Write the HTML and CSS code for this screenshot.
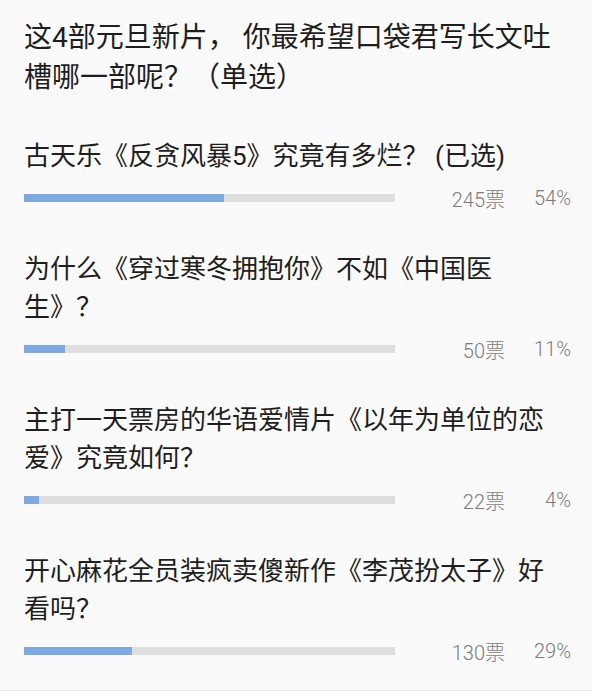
FILE: index.html
```html
<html lang="zh-CN">

<head>
    <meta charset="UTF-8">
    <meta name="viewport" content="width=device-width, initial-scale=1.0">
    <title>元旦新片投票</title>

    <link rel="stylesheet" href="styles.css">
</head>

<body>
    <!-- Vote card -->
    <div class="vote">
        <h1 class="vote-title">这4部元旦新片， 你最希望口袋君写长文吐槽哪一部呢？（单选）</h1>

        <div class="option">
            <p class="option-text">古天乐《反贪风暴5》究竟有多烂？ (已选)</p>
            <div class="stats">
                <div class="bar"><div class="bar-fill" style="width: 54%"></div></div>
                <span class="count">245票</span>
                <span class="percent">54%</span>
            </div>
        </div>

        <div class="option">
            <p class="option-text">为什么《穿过寒冬拥抱你》不如《中国医生》？</p>
            <div class="stats">
                <div class="bar"><div class="bar-fill" style="width: 11%"></div></div>
                <span class="count">50票</span>
                <span class="percent">11%</span>
            </div>
        </div>

        <div class="option">
            <p class="option-text">主打一天票房的华语爱情片《以年为单位的恋爱》究竟如何？</p>
            <div class="stats">
                <div class="bar"><div class="bar-fill" style="width: 4%"></div></div>
                <span class="count">22票</span>
                <span class="percent">4%</span>
            </div>
        </div>

        <div class="option">
            <p class="option-text">开心麻花全员装疯卖傻新作《李茂扮太子》好看吗？</p>
            <div class="stats">
                <div class="bar"><div class="bar-fill" style="width: 29%"></div></div>
                <span class="count">130票</span>
                <span class="percent">29%</span>
            </div>
        </div>
    </div>
</body>

</html>
```

FILE: styles.css
```css
body {
    margin: 0;
    padding: 0;
    background-color: #fff;
    font-family: Roboto, "Noto Sans CJK SC", sans-serif;
    color: #1e1e1e;
}

.vote {
    width: 592px;
    height: 691px;
    box-sizing: border-box;
    padding: 18px 21px 0 24px;
    background-color: #fafafa;
    border-bottom: 1px solid #e6e6e6;
}

.vote-title {
    margin: 0;
    padding-right: 11px;
    font-size: 28px;
    font-weight: normal;
    line-height: 40px;
}

.option {
    margin-top: 29px;
}

.vote-title + .option {
    margin-top: 39px;
}

.option-text {
    margin: 0;
    padding-right: 11px;
    font-size: 26px;
    line-height: 38px;
}

.stats {
    display: flex;
    align-items: center;
    height: 46px;
    font-size: 20px;
    font-weight: 300;
    color: #7c7c7c;
}

.bar {
    width: 371px;
    height: 8px;
    background-color: #dedede;
}

.bar-fill {
    height: 100%;
    background-color: #7ea9e1;
}

.count {
    width: 110px;
    text-align: right;
}

.percent {
    width: 66px;
    text-align: right;
}
```
